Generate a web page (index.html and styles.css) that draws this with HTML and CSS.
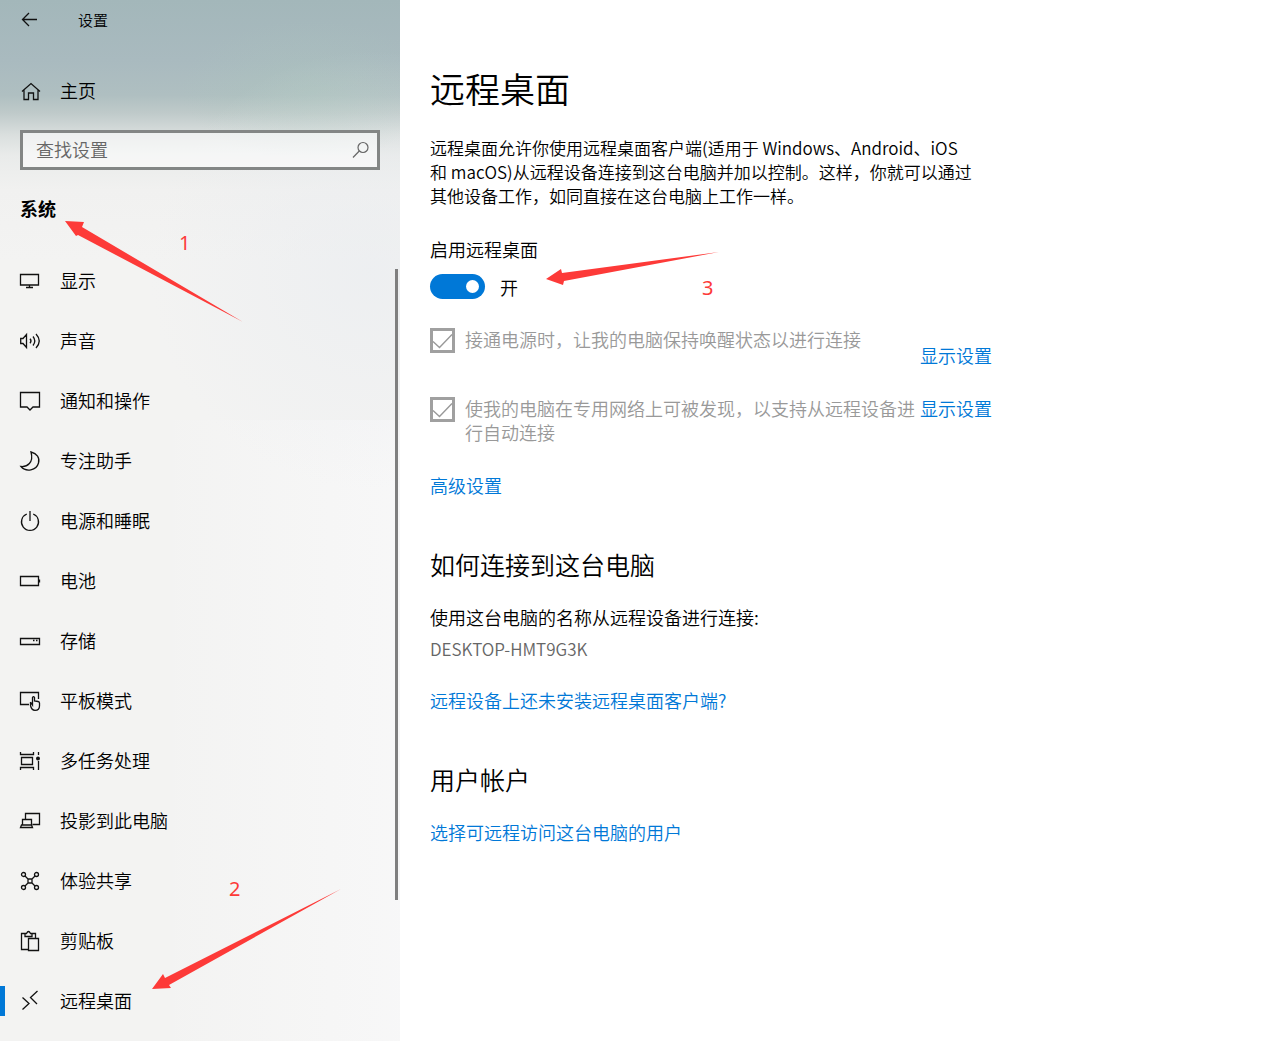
FILE: index.html
```html
<!DOCTYPE html>
<html lang="zh-CN">
<head>
<meta charset="utf-8">
<meta name="viewport" content="width=device-width, initial-scale=1">
<title>设置</title>
<link rel="stylesheet" href="styles.css">
</head>
<body>
<div class="window">
  <aside class="sidebar">
    <header class="titlebar">
      <button class="back" type="button" aria-label="返回">
        <svg class="icon" viewBox="0 0 20 20"><path d="M17 9.500H2.500M9 3L2.500 9.500L9 16"/></svg>
      </button>
      <span class="app-name">设置</span>
    </header>
    <a class="home" href="#">
      <svg class="icon" viewBox="0 0 20 20"><path d="M2 10.500L11 2.500L20 10.500M4 9V18.500H8.500V12H13.500V18.500H18V9"/></svg>
      <span>主页</span>
    </a>
    <form class="search">
      <input class="search-input" type="search" placeholder="查找设置" aria-label="查找设置">
      <svg class="search-icon" viewBox="0 0 20 20"><circle cx="13" cy="7.500" r="5"/><path d="M9.300 11L3 17.500"/></svg>
    </form>
    <h2 class="group">系统</h2>
    <nav class="nav">
      <a class="nav-item" href="#"><svg class="icon" viewBox="0 0 20 20"><path d="M.5 3.500H18.500V14H.5ZM9.500 14V16.500M6 16.500H13"/></svg><span>显示</span></a>
      <a class="nav-item" href="#"><svg class="icon" viewBox="0 0 20 20"><path d="M.7 7.500H3L6.500 3.500V16.500L3 12.500H.7ZM10 7.800Q12 10 10 12.200M13 5.500Q16.600 10 13 14.500M16 3Q22.500 10 16 17"/></svg><span>声音</span></a>
      <a class="nav-item" href="#"><svg class="icon" viewBox="0 0 20 20"><path d="M.5 1.500H19.500V16H13L10 19L7 16H.5Z"/></svg><span>通知和操作</span></a>
      <a class="nav-item" href="#"><svg class="icon" viewBox="0 0 20 20"><path d="M11 1C17 2.500 20 7 18.500 12C16.500 19.500 6 21.500 1 15.500C7 16 14 12 11 1Z"/></svg><span>专注助手</span></a>
      <a class="nav-item" href="#"><svg class="icon" viewBox="0 0 20 20"><path d="M6.800 3A8.500 8.500 0 1 0 13.200 3M10 0V10"/></svg><span>电源和睡眠</span></a>
      <a class="nav-item" href="#"><svg class="icon" viewBox="0 0 20 20"><path d="M.5 5.500H18.500V14.500H.5ZM19.500 8.500V11.500"/></svg><span>电池</span></a>
      <a class="nav-item" href="#"><svg class="icon" viewBox="0 0 20 20"><path d="M.5 7.500H19.500V13.500H.5ZM13 9.500H14.500M16 9.500H17.500"/></svg><span>存储</span></a>
      <a class="nav-item" href="#"><svg class="icon" viewBox="0 0 20 20"><path d="M9 13.500H.5V1.500H18.500V8M10.500 11V14.500Q11.500 19.300 15 19.300Q19.500 19.300 19.500 15V12Q19.500 10.800 18 10.500L14.500 10V6.500Q13.500 4.800 12.500 6.500V14L10.500 11"/></svg><span>平板模式</span></a>
      <a class="nav-item" href="#"><svg class="icon" viewBox="0 0 20 20"><path d="M.5 1V3.500H13.500V1M1.500 6.500H12.500V13.500H1.500ZM.5 19V16.500H13.500V19M18.500 1V4M18.500 10V19"/><circle class="solid" cx="18" cy="7.500" r="2"/></svg><span>多任务处理</span></a>
      <a class="nav-item" href="#"><svg class="icon" viewBox="0 0 20 20"><path d="M5.500 8V2.500H19.500V13.500H12.500M2.500 14V8.500H11.500V14M.5 16.500H12.500L11.500 14H1.500Z"/></svg><span>投影到此电脑</span></a>
      <a class="nav-item" href="#"><svg class="icon" viewBox="0 0 20 20"><path d="M5 5L8 8M15 5L12 8M5 15L8 12M15 15L12 12M8 8H12V12H8Z"/><circle cx="3.500" cy="3.500" r="2"/><circle cx="16.500" cy="3.500" r="2"/><circle cx="3.500" cy="16.500" r="2"/><circle cx="16.500" cy="16.500" r="2"/></svg><span>体验共享</span></a>
      <a class="nav-item" href="#"><svg class="icon" viewBox="0 0 20 20"><path d="M8.500 18.500H1.500V2.500H5.500M11.500 2.500H15.500V7.500M5 5.500V2.500H6.500Q8.500-1.500 10.500 2.500H12V5.500ZM8.500 7.500H18.500V19.500H8.500Z"/></svg><span>剪贴板</span></a>
      <a class="nav-item nav-item-current" href="#" aria-current="page"><svg class="icon" viewBox="0 0 20 20"><path d="M2.500 6.500L9 12.500L2.500 18.500M17.500 0L10.500 6.500L17 13"/></svg><span>远程桌面</span></a>
    </nav>
    <span class="scrollbar"></span>
  </aside>

  <main class="content">
    <h1 class="title">远程桌面</h1>
    <p class="intro">远程桌面允许你使用远程桌面客户端(适用于 Windows、Android、iOS<br>和 macOS)从远程设备连接到这台电脑并加以控制。这样，你就可以通过<br>其他设备工作，如同直接在这台电脑上工作一样。</p>

    <label class="switch-label" for="remote-switch">启用远程桌面</label>
    <div class="switch-row">
      <input class="switch" id="remote-switch" type="checkbox" role="switch" checked>
      <span>开</span>
    </div>

    <div class="options">
      <div class="option">
        <span class="check">
          <input class="check-box" id="keep-awake" type="checkbox" checked disabled>
          <svg class="check-mark" viewBox="0 0 25 25"><path d="M3 13.500L9.500 19.500L22 6.500"/></svg>
        </span>
        <label class="option-text" for="keep-awake">接通电源时，让我的电脑保持唤醒状态以进行连接</label>
        <a class="link option-link-low" href="#">显示设置</a>
      </div>
      <div class="option">
        <span class="check">
          <input class="check-box" id="discoverable" type="checkbox" checked disabled>
          <svg class="check-mark" viewBox="0 0 25 25"><path d="M3 13.500L9.500 19.500L22 6.500"/></svg>
        </span>
        <label class="option-text" for="discoverable">使我的电脑在专用网络上可被发现，以支持从远程设备进<br>行自动连接</label>
        <a class="link" href="#">显示设置</a>
      </div>
    </div>
    <a class="link" href="#">高级设置</a>

    <section class="section">
      <h2 class="section-title">如何连接到这台电脑</h2>
      <p class="line">使用这台电脑的名称从远程设备进行连接:</p>
      <p class="line pc-name">DESKTOP-HMT9G3K</p>
      <a class="link" href="#">远程设备上还未安装远程桌面客户端?</a>
    </section>

    <section class="section">
      <h2 class="section-title">用户帐户</h2>
      <a class="link" href="#">选择可远程访问这台电脑的用户</a>
    </section>
  </main>

  <svg class="arrows" width="760" height="1000" viewBox="0 0 760 1000" aria-hidden="true">
    <path d="M65 221L84 222L82 227L243 322L78 235L76 236Z"/>
    <path d="M152 989L163 974L165 978L341 889L169 985L171 988Z"/>
    <path d="M546 279L561 269L562 273L719 252L564 281L563 285Z"/>
  </svg>
  <span class="mark mark-1">1</span>
  <span class="mark mark-2">2</span>
  <span class="mark mark-3">3</span>
</div>
</body>
</html>
```
FILE: styles.css
```css
* {
  box-sizing: border-box;
}

body {
  margin: 0;
  background: #fff;
  color: #000;
  font: 350 18px/24px "Noto Sans CJK SC", sans-serif;
}

h1, h2, p {
  margin: 0;
  font-weight: 350;
}

a {
  color: inherit;
  text-decoration: none;
}

.window {
  position: relative;
  display: flex;
  min-height: 100vh;
}

/* Sidebar */
.sidebar {
  position: relative;
  flex: 0 0 400px;
  padding-bottom: 10px;
  background:
    radial-gradient(ellipse 130px 70px at 310px 90px, rgba(172, 200, 188, .35), rgba(172, 200, 188, 0)),
    radial-gradient(ellipse 220px 220px at 370px 270px, rgba(233, 236, 240, .6), rgba(233, 236, 240, 0)),
    linear-gradient(90deg, rgba(249, 249, 250, 0) 40%, rgba(249, 249, 250, .7)) 0 420px no-repeat,
    linear-gradient(#a3b7ba 0, #a9babf 60px, #afbfc1 95px, #bfcaca 113px, #dadfde 135px, #e9ebea 155px, #f1f1f0 190px, #f3f3f2 260px);
}

.icon {
  flex: none;
  width: 20px;
  height: 20px;
  overflow: visible;
  fill: none;
  stroke: #111;
  stroke-width: 1.3;
}

.solid {
  fill: #111;
  stroke: none;
}

.titlebar {
  display: flex;
  align-items: center;
  gap: 38px;
  height: 40px;
  padding-left: 20px;
  font-size: 15px;
}

.back {
  display: flex;
  padding: 0;
  border: 0;
  background: none;
}

.home {
  display: flex;
  align-items: center;
  gap: 20px;
  height: 60px;
  margin-top: 21px;
  padding-left: 20px;
}

.search {
  display: flex;
  align-items: center;
  height: 40px;
  margin: 9px 20px 0;
  padding-right: 7px;
  border: 3px solid #838685;
  background: rgba(255, 255, 255, .55);
}

.search-input {
  flex: 1;
  min-width: 0;
  padding: 0 0 2px 13px;
  border: 0;
  outline: 0;
  background: none;
  font: inherit;
}

.search-input::placeholder {
  color: #666;
}

.search-icon {
  width: 20px;
  height: 20px;
  fill: none;
  stroke: #666;
  stroke-width: 1.2;
}

.group {
  margin: 26px 20px 31px;
  font-size: 18px;
  font-weight: 700;
  line-height: 24px;
}

.nav-item {
  display: flex;
  align-items: center;
  gap: 20px;
  height: 60px;
  padding-left: 20px;
}

.home span,
.nav-item span {
  padding-bottom: 2px;
}

.nav-item-current::before {
  content: "";
  width: 5px;
  height: 30px;
  margin: 0 -5px 0 -20px;
  background: #0078d7;
}

.scrollbar {
  position: absolute;
  top: 269px;
  right: 2px;
  width: 3px;
  height: 631px;
  background: #7f7f7f;
}

/* Page content */
.content {
  flex: 1;
  min-width: 0;
  padding: 64px 30px 30px;
}

.title {
  font-size: 35px;
  line-height: 48px;
}

.intro {
  margin-top: 24px;
  font-size: 17px;
}

.link {
  display: inline-block;
  color: #0078d7;
}

.switch-label {
  display: block;
  margin-top: 29px;
}

.switch-row {
  display: flex;
  align-items: center;
  gap: 15px;
  height: 25px;
  margin-top: 13px;
}

.switch {
  appearance: none;
  display: flex;
  align-items: center;
  justify-content: flex-end;
  width: 55px;
  height: 25px;
  margin: 0;
  padding-right: 6px;
  border-radius: 13px;
  background: #0078d7;
}

.switch::before {
  content: "";
  width: 13px;
  height: 13px;
  border-radius: 50%;
  background: #fff;
}

.options {
  display: grid;
  gap: 29px;
  margin: 28px 0 29px;
}

.option {
  display: grid;
  grid-template-columns: 25px 445px auto;
  column-gap: 10px;
  justify-content: start;
  align-items: start;
}

.option-text {
  color: #999;
  white-space: nowrap;
}

.option-link-low {
  margin-top: 16px;
}

.check {
  display: grid;
  margin-top: 1px;
}

.check-box,
.check-mark {
  grid-area: 1 / 1;
  width: 25px;
  height: 25px;
  margin: 0;
}

.check-box {
  appearance: none;
  border: 3px solid #a0a0a0;
}

.check-mark {
  fill: none;
  stroke: #999;
  stroke-width: 1.4;
  pointer-events: none;
}

.section {
  margin-top: 50px;
}

.section-title {
  margin-bottom: 24px;
  font-size: 25px;
  line-height: 34px;
}

.line {
  margin-bottom: 8px;
}

.pc-name {
  margin-bottom: 27px;
  color: #666;
  font-size: 17px;
}

/* Annotations laid over the window */
.arrows {
  position: absolute;
  top: 0;
  left: 0;
  fill: #fd3a38;
  pointer-events: none;
}

.mark {
  position: absolute;
  color: #fd3a38;
  font: 20px/24px "Noto Sans", sans-serif;
}

.mark-1 {
  top: 231px;
  left: 179px;
}

.mark-2 {
  top: 877px;
  left: 229px;
}

.mark-3 {
  top: 276px;
  left: 702px;
}
```
